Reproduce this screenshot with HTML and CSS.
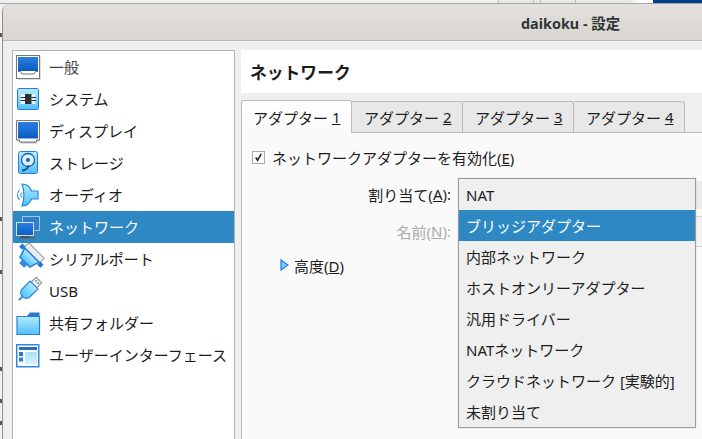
FILE: index.html
```html
<!DOCTYPE html>
<html lang="ja">
<head>
<meta charset="utf-8">
<title>daikoku - 設定</title>
<link rel="stylesheet" href="styles.css">
</head>
<body>
<svg class="defs" aria-hidden="true">
  <defs>
    <linearGradient id="blue" x1="0" y1="0" x2="0" y2="1"><stop offset="0" stop-color="#2a7fe0"/><stop offset="1" stop-color="#0a5cc4"/></linearGradient>
    <linearGradient id="cyan" x1="0" y1="0" x2="0" y2="1"><stop offset="0" stop-color="#b4ebff"/><stop offset="1" stop-color="#4fc0fb"/></linearGradient>
    <linearGradient id="pale" x1="0" y1="0" x2="0" y2="1"><stop offset="0" stop-color="#a6e0fb"/><stop offset="1" stop-color="#d8f3fd"/></linearGradient>
  </defs>
</svg>
<div class="desk-strip"></div>
<div class="frags"></div>
<div class="window">
  <header class="titlebar"><span class="title">daikoku - 設定</span></header>
  <div class="body">
    <ul class="sidebar">
      <li class="nav-item">
        <svg class="icon" viewBox="0 0 24 24"><rect x="1.500" y="1.500" width="23" height="23" fill="#bbb"/><rect x=".5" y=".5" width="23" height="23" fill="#fff" stroke="#777"/><rect x="2" y="2" width="20" height="14" fill="url(#blue)"/><path d="M2 16.500h2.500l1.500 2.500h12l1.500-2.500H22" fill="none" stroke="#777"/></svg>
        <span class="nav-label nav-label-muted">一般</span>
      </li>
      <li class="nav-item">
        <svg class="icon" viewBox="0 0 24 24"><rect x="1.500" y="1.500" width="21" height="21" rx="1" fill="url(#cyan)" stroke="#2a7dd8"/><rect x="4.500" y="7" width="15" height="10" fill="#e8f4fa"/><rect x="9" y="7" width="6.500" height="10" fill="#2c3138"/><path d="M4.500 10.500H9M4.500 13.500H9M15.500 10.500H20M15.500 13.500H20" stroke="#2c3138"/></svg>
        <span class="nav-label">システム</span>
      </li>
      <li class="nav-item">
        <svg class="icon" viewBox="0 0 24 24"><path d="M1.500 2.500h22v20h-3v2h-16v-2h-3z" fill="#bbb"/><path d="M.5 1.500h23v19.500h-3v2h-17v-2h-3z" fill="#fff" stroke="#777"/><rect x="2" y="3" width="20" height="16.500" fill="url(#blue)"/></svg>
        <span class="nav-label">ディスプレイ</span>
      </li>
      <li class="nav-item">
        <svg class="icon" viewBox="0 0 24 24"><rect x="2.500" y=".5" width="19" height="22" rx="2" fill="url(#cyan)" stroke="#2a7dd8"/><circle cx="12" cy="9" r="6.500" fill="#d7f3ff" stroke="#1c5f9e" stroke-width="1.300"/><circle cx="12" cy="9" r="2" fill="#1c5f9e"/><path d="M6 19.500c3 0 5-1 7-5" fill="none" stroke="#1c4f80" stroke-width="1.800"/></svg>
        <span class="nav-label">ストレージ</span>
      </li>
      <li class="nav-item">
        <svg class="icon" viewBox="0 0 24 24"><path d="M6 1c5 0 8 3 9.500 7H22v8h-6.500C14 20 11 23 6 23c2.500-6 2.500-16 0-22z" fill="url(#cyan)" stroke="#2a88e0" stroke-width="1.200"/><path d="M3.500 7c-2.500 3-2.500 7 0 10M5.500 9.500c-1 1.500-1 3.500 0 5" fill="none" stroke="#2a88e0" stroke-width="1.100"/></svg>
        <span class="nav-label">オーディオ</span>
      </li>
      <li class="nav-item is-selected">
        <svg class="icon" viewBox="0 0 24 24"><rect x="6.500" y="1.500" width="17" height="14" fill="#2f7fc8" stroke="#a9c3d8"/><rect x="3" y="16" width="16" height="8" fill="#4c6f88"/><rect x=".5" y="7.500" width="17" height="13" fill="url(#blue)" stroke="#d8e2ea"/><rect x="5" y="21" width="9" height="2" fill="#3e5566"/></svg>
        <span class="nav-label">ネットワーク</span>
      </li>
      <li class="nav-item">
        <svg class="icon" viewBox="0 0 24 24"><g transform="rotate(45 12 12)"><rect x="1" y="0" width="22" height="6.500" fill="#ececec" stroke="#9a9a9a"/><path d="M2 6.500h20l-3 10h-14z" fill="url(#cyan)" stroke="#2a7dd8" stroke-width="1.500"/><rect x="8.500" y="16.500" width="7" height="4.500" fill="#2f8ae4"/><rect x="-3" y="5" width="4.500" height="4.500" fill="#1f78d8"/><rect x="22.500" y="5" width="4.500" height="4.500" fill="#1f78d8"/></g></svg>
        <span class="nav-label">シリアルポート</span>
      </li>
      <li class="nav-item">
        <svg class="icon" viewBox="0 0 24 24"><g transform="rotate(45 12 12)"><rect x="8" y="-3.500" width="8" height="7" fill="#f4f4f4" stroke="#8a8a8a"/><rect x="9.800" y="-1.500" width="1.500" height="1.500" fill="#666"/><rect x="12.800" y="-1.500" width="1.500" height="1.500" fill="#666"/><path d="M6.500 3.500h11V15c0 3-3 5-5.500 5s-5.500-2-5.500-5z" fill="url(#cyan)" stroke="#2a88e0" stroke-width="1.200"/><path d="M12 20v5" stroke="#2a88e0" stroke-width="1.800"/></g></svg>
        <span class="nav-label">USB</span>
      </li>
      <li class="nav-item">
        <svg class="icon" viewBox="0 0 24 24"><path d="M11 5l3-3.500h9.500V8H11z" fill="#2c77cf"/><path d="M1 5.500h22.500v18H1z" fill="url(#cyan)" stroke="#2a7dd8" stroke-width="1.200"/></svg>
        <span class="nav-label">共有フォルダー</span>
      </li>
      <li class="nav-item">
        <svg class="icon" viewBox="0 0 24 24"><rect x=".75" y="1.750" width="22" height="22" fill="#fff" stroke="#2f87e0" stroke-width="1.500"/><rect x="3" y="4" width="18" height="3" fill="#2c6cc0"/><rect x="3" y="9" width="4" height="4" fill="#2a78d8"/><rect x="3" y="14.500" width="4" height="4" fill="#2a78d8"/><rect x="9" y="9" width="12" height="12.500" fill="url(#pale)"/></svg>
        <span class="nav-label">ユーザーインターフェース</span>
      </li>
    </ul>
    <main class="content">
      <h1 class="page-title">ネットワーク</h1>
      <div class="tabs">
        <div class="tab is-active">アダプター <u>1</u></div>
        <div class="tab">アダプター <u>2</u></div>
        <div class="tab">アダプター <u>3</u></div>
        <div class="tab">アダプター <u>4</u></div>
      </div>
      <section class="panel">
        <div class="check-row">
          <span class="checkbox"><svg viewBox="0 0 12 12" class="check"><path d="M3 6l2 3 4-7" fill="none" stroke="#222" stroke-width="1.700"/></svg></span>
          <span>ネットワークアダプターを有効化(<u>E</u>)</span>
        </div>
        <div class="form">
          <label class="form-label">割り当て(<u>A</u>):</label>
          <div class="field"></div>
          <label class="form-label is-disabled">名前(<u>N</u>):</label>
          <div class="field field-name"></div>
        </div>
        <div class="advanced">
          <svg class="triangle" viewBox="0 0 9 12"><path d="M1 1l7 5-7 5z" fill="#7fc8f8" stroke="#1f7fdc" stroke-width="1.200"/></svg>
          <span>高度(<u>D</u>)</span>
        </div>
        <ul class="popup">
          <li class="popup-item">NAT</li>
          <li class="popup-item is-selected">ブリッジアダプター</li>
          <li class="popup-item">内部ネットワーク</li>
          <li class="popup-item">ホストオンリーアダプター</li>
          <li class="popup-item">汎用ドライバー</li>
          <li class="popup-item">NATネットワーク</li>
          <li class="popup-item">クラウドネットワーク [実験的]</li>
          <li class="popup-item">未割り当て</li>
        </ul>
      </section>
    </main>
  </div>
</div>
</body>
</html>
```

FILE: styles.css
```css
* { box-sizing: border-box; }
html, body { margin: 0; padding: 0; }
body {
  position: relative;
  width: 702px;
  height: 439px;
  overflow: hidden;
  background: #f2f2f2;
  font-family: "Noto Sans", "Noto Sans CJK JP", sans-serif;
  font-size: 15px;
  color: #1c1c1c;
}
ul { list-style: none; margin: 0; padding: 0; }
.defs { position: absolute; width: 0; height: 0; }

.desk-strip {
  height: 4px;
  border-bottom: 1px solid #a9a6a2;
  background: linear-gradient(to right,
    #f0f0f0 0, #f0f0f0 498px, #bbb 498px, #bbb 499px, #e9e9e9 499px,
    #e9e9e9 533px, #bbb 533px, #bbb 534px, #e9e9e9 534px,
    #e9e9e9 540px, #bbb 540px, #bbb 541px, #e9e9e9 541px,
    #e9e9e9 575px, #bbb 575px, #bbb 576px, #e9e9e9 576px,
    #e9e9e9 629px, #fff 640px, #f7f7f7 653px, #003f8f 653px, #003f8f 702px);
}
.frags {
  position: absolute;
  left: 0;
  top: 33px;
  width: 2px;
  height: 4px;
  background: #555;
  box-shadow: 0 184px #555, 0 237px #555, 0 334px #555, 0 366px #555, 0 388px #555;
}

.window {
  margin-left: 2px;
  height: 435px;
  border-left: 1px solid #8f8f8f;
  border-top-left-radius: 8px;
  background: #efefef;
  display: flex;
  flex-direction: column;
  overflow: hidden;
}
.titlebar {
  flex: none;
  height: 37px;
  padding-left: 518px;
  display: flex;
  align-items: center;
  border-bottom: 1px solid #bdb6af;
  background: linear-gradient(#e3e0dd, #d9d6d1);
}
.title {
  font-weight: 700;
  color: #2e3436;
  font-size: 14.4px;
  white-space: nowrap;
}
.body {
  flex: 1;
  min-height: 0;
  padding: 9px 0 0 9px;
  display: flex;
  gap: 6px;
}

.sidebar {
  flex: none;
  width: 223px;
  border: 1px solid #b2b2b2;
  border-bottom: 0;
  background: #fff;
}
.nav-item {
  height: 32px;
  padding-left: 3px;
  display: flex;
  align-items: center;
  gap: 9px;
  white-space: nowrap;
}
.nav-item.is-selected { background: #2e88c4; color: #fff; }
.nav-label { line-height: 1; padding-top: 1px; }
.nav-label-muted { color: #444; }
.icon { flex: none; width: 24px; height: 24px; overflow: visible; }

.content {
  flex: 1;
  min-width: 0;
  display: flex;
  flex-direction: column;
}
.page-title {
  flex: none;
  height: 43px;
  margin: 0 0 7px;
  padding-left: 9px;
  display: flex;
  align-items: center;
  background: #fff;
  font-size: 16.8px;
  font-weight: 700;
}
.tabs {
  flex: none;
  height: 32px;
  display: flex;
  align-items: flex-end;
  position: relative;
  z-index: 1;
}
.tab {
  width: 111px;
  height: 31px;
  padding-left: 12px;
  display: flex;
  align-items: center;
  border: 1px solid #bcbcbc;
  border-left-width: 0;
  border-bottom: 0;
  border-radius: 0 3px 0 0;
  background: #e8e8e8;
  white-space: pre;
}
.tab.is-active {
  height: 33px;
  margin-bottom: -1px;
  padding-left: 11px;
  border-left-width: 1px;
  border-radius: 3px 3px 0 0;
  background: linear-gradient(#fff, #fafafa);
}
.panel {
  flex: 1;
  position: relative;
  padding: 15px 0 0 10px;
  border-top: 1px solid #bcbcbc;
  border-left: 1px solid #bcbcbc;
  background: #fafafa;
}
.check-row {
  height: 18px;
  display: flex;
  align-items: center;
  gap: 7px;
  white-space: nowrap;
}
.checkbox {
  flex: none;
  width: 13px;
  height: 13px;
  border: 1px solid #ababab;
  background: #fff;
  display: flex;
}
.check { width: 11px; height: 11px; }
.form {
  margin-top: 15px;
  display: grid;
  grid-template-columns: 199px 1fr;
  grid-auto-rows: 28px;
  column-gap: 7px;
  row-gap: 9px;
}
.form-label {
  display: flex;
  align-items: center;
  justify-content: flex-end;
  padding-bottom: 2px;
  white-space: pre;
}
.form-label.is-disabled { color: #ababab; }
.field { background: #ececec; }
.field-name {
  margin-top: -2px;
  height: 31px;
  border-top: 1px solid #d4d4d4;
  border-bottom: 1px solid #d4d4d4;
  background: #f3f3f3;
}
.advanced {
  margin-top: 10px;
  padding-left: 28px;
  height: 18px;
  display: flex;
  align-items: center;
  gap: 5px;
}
.triangle { flex: none; width: 9px; height: 12px; }
.popup {
  position: absolute;
  left: 216px;
  top: 45px;
  width: 238px;
  border: 1px solid #9a9a9a;
  background: #efefef;
  box-shadow: 0 0 1px rgba(0, 0, 0, .25);
}
.popup-item {
  height: 31px;
  padding-left: 7px;
  display: flex;
  align-items: center;
  white-space: pre;
}
.popup-item.is-selected { background: #2e88c4; color: #fff; }
```
